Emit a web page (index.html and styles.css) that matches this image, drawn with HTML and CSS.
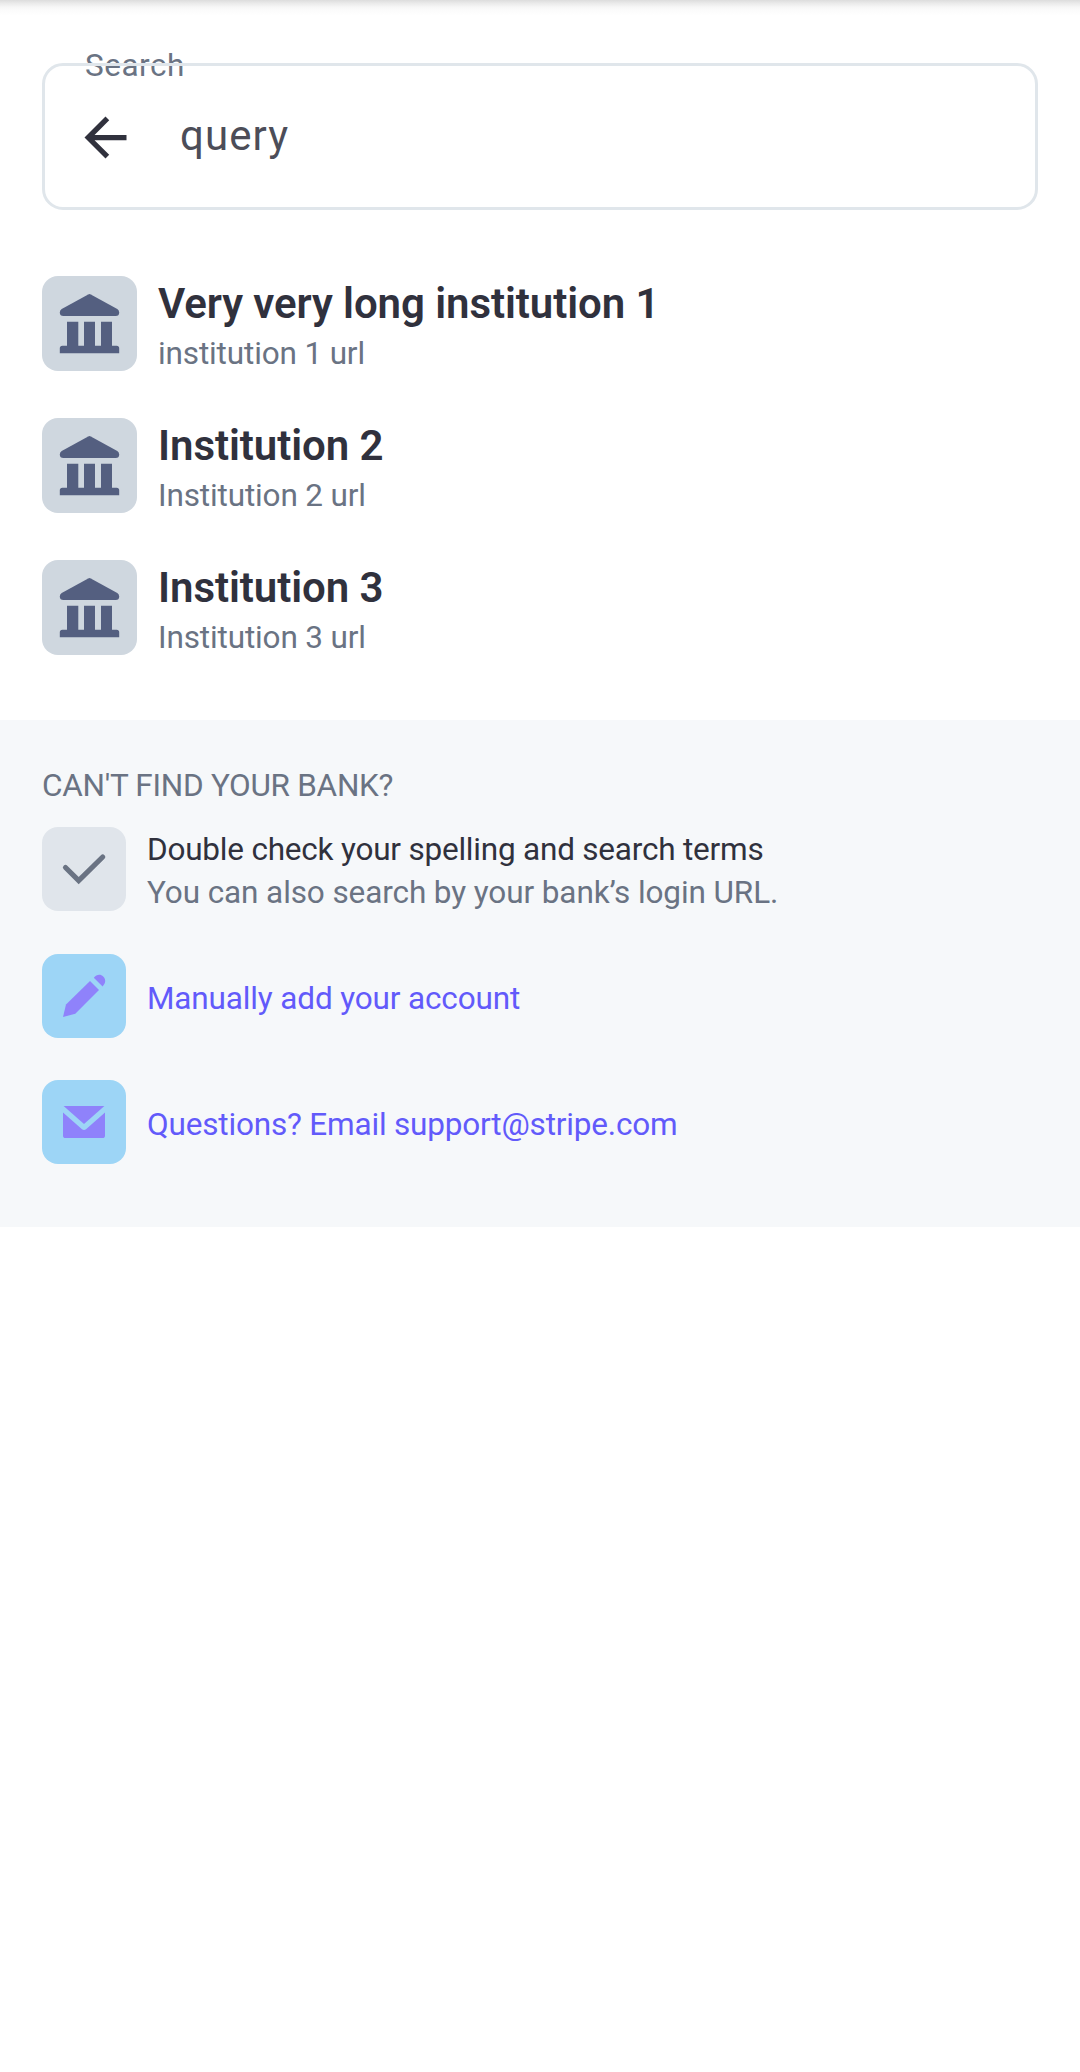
FILE: index.html
```html
<!DOCTYPE html>
<html lang="en">
<head>
<meta charset="utf-8">
<title>Find your bank</title>
<link rel="stylesheet" href="styles.css">
</head>
<body>
<svg class="defs" width="0" height="0" aria-hidden="true">
  <symbol id="bank" viewBox="0 0 95 95">
    <path d="M46.2 18.4Q47.5 17.7 48.8 18.4L75.3 33Q77.2 34.2 77.2 36.5Q77.2 40 73.7 40H21.5Q17.8 40 17.8 36.5Q17.8 34.2 19.7 33Z"/>
    <path d="M25 45.7H36.3V69.7H42V45.7H53V69.7H59V45.7H70V69.7H74.6Q77.2 69.7 77.2 72.3V77.2H17.8V72.3Q17.8 69.7 20.4 69.7H25Z"/>
  </symbol>
</svg>
<div class="topbar"></div>
<main>
  <div class="search">
    <label class="search-label">Search</label>
    <div class="field">
      <svg class="back" viewBox="0 0 24 24"><path d="M20 11H7.83l5.59-5.59L12 4l-8 8 8 8 1.41-1.41L7.83 13H20v-2z"/></svg>
      <span class="query">query</span>
    </div>
  </div>
  <ul class="results">
    <li class="result">
      <svg class="logo"><use href="#bank"/></svg>
      <div><div class="name">Very very long institution 1</div><div class="url">institution 1 url</div></div>
    </li>
    <li class="result">
      <svg class="logo"><use href="#bank"/></svg>
      <div><div class="name">Institution 2</div><div class="url">Institution 2 url</div></div>
    </li>
    <li class="result">
      <svg class="logo"><use href="#bank"/></svg>
      <div><div class="name">Institution 3</div><div class="url">Institution 3 url</div></div>
    </li>
  </ul>
  <section class="help">
    <h2 class="help-title">CAN'T FIND YOUR BANK?</h2>
    <div class="tip">
      <svg class="tile tile-gray" viewBox="0 0 84 84"><path d="M23.5 40.5L36.7 53.5L60.7 30" fill="none" stroke="#6a7383" stroke-width="5.2" stroke-linecap="round"/></svg>
      <div class="tip-text"><div class="tip-main">Double check your spelling and search terms</div><div class="tip-sub">You can also search by your bank’s login URL.</div></div>
    </div>
    <div class="tip">
      <svg class="tile tile-blue" viewBox="0 0 84 84"><path d="M21 63L24 50.5L48 27L57 36L33.3 59.8Z"/><path d="M51.8 23.8C54.5 20.2 58.8 20 61.2 22.6C64 25.2 64 29.3 60.6 32.4Z"/></svg>
      <div class="link">Manually add your account</div>
    </div>
    <div class="tip">
      <svg class="tile tile-blue" viewBox="0 0 84 84"><path d="M21.6 26H62.4L42 44Z"/><path d="M21 32.6L40 49.2Q42 50.8 44 49.2L63 32.6V55.4Q63 58 60.4 58H23.6Q21 58 21 55.4Z"/></svg>
      <div class="link link-email">Questions? Email support@stripe.com</div>
    </div>
  </section>
</main>
</body>
</html>
```
FILE: styles.css
```css
* { box-sizing: border-box; }
body { margin: 0; min-height: 2072px; background: #fff; color: #30313d; font-family: Roboto, sans-serif; font-size: 31.5px; }
.defs { display: block; height: 0; }
.topbar { height: 16px; margin-bottom: -16px; background: linear-gradient(#dcdcdc, #e9e9e9 3px, #f6f6f6 7px, #fcfcfc 11px, #fff); }
.search { position: relative; padding: 63px 42px 0; }
.search-label { position: absolute; left: 85px; top: 45px; line-height: 42px; letter-spacing: .5px; color: #6a7383; }
.field { position: relative; height: 147px; display: flex; align-items: center; gap: 43px; padding-left: 29px; border: 3px solid #e0e6eb; border-radius: 21px; }
.back { width: 63px; height: 63px; margin-top: 1px; fill: #30313d; }
.query { margin-top: -3px; font-size: 42px; line-height: 63px; letter-spacing: 1.1px; color: #4c4d58; }
.results { list-style: none; margin: 0; padding: 66px 42px 65px; display: flex; flex-direction: column; gap: 47px; }
.result { display: flex; gap: 21px; height: 95px; }
.logo { width: 95px; height: 95px; border-radius: 16px; background: #cfd7df; fill: #545f80; }
.name { margin-top: -4px; font-size: 42px; font-weight: 600; line-height: 63px; letter-spacing: -.08px; }
.url { margin-top: -2px; line-height: 42px; letter-spacing: -.14px; color: #6a7383; }
.help { height: 507px; padding: 45px 42px 0; background: #f6f8fa; }
.help-title { margin: 0 0 20px; font-size: 31.5px; font-weight: 400; line-height: 42px; letter-spacing: -.28px; color: #6a7383; }
.tip { display: flex; align-items: center; gap: 21px; height: 84px; margin-bottom: 42.5px; }
.tile { width: 84px; height: 84px; border-radius: 16px; }
.tile-gray { background: #e0e5eb; }
.tile-blue { background: #9dd5f6; fill: #8f82fb; }
.tip-text { padding-top: 4px; line-height: 43px; letter-spacing: -.21px; }
.tip-sub { letter-spacing: -.1px; color: #6a7383; }
.link { line-height: 42px; color: #625afa; padding-top: 6px; letter-spacing: -.14px; }
.link-email { letter-spacing: -.18px; }
```
